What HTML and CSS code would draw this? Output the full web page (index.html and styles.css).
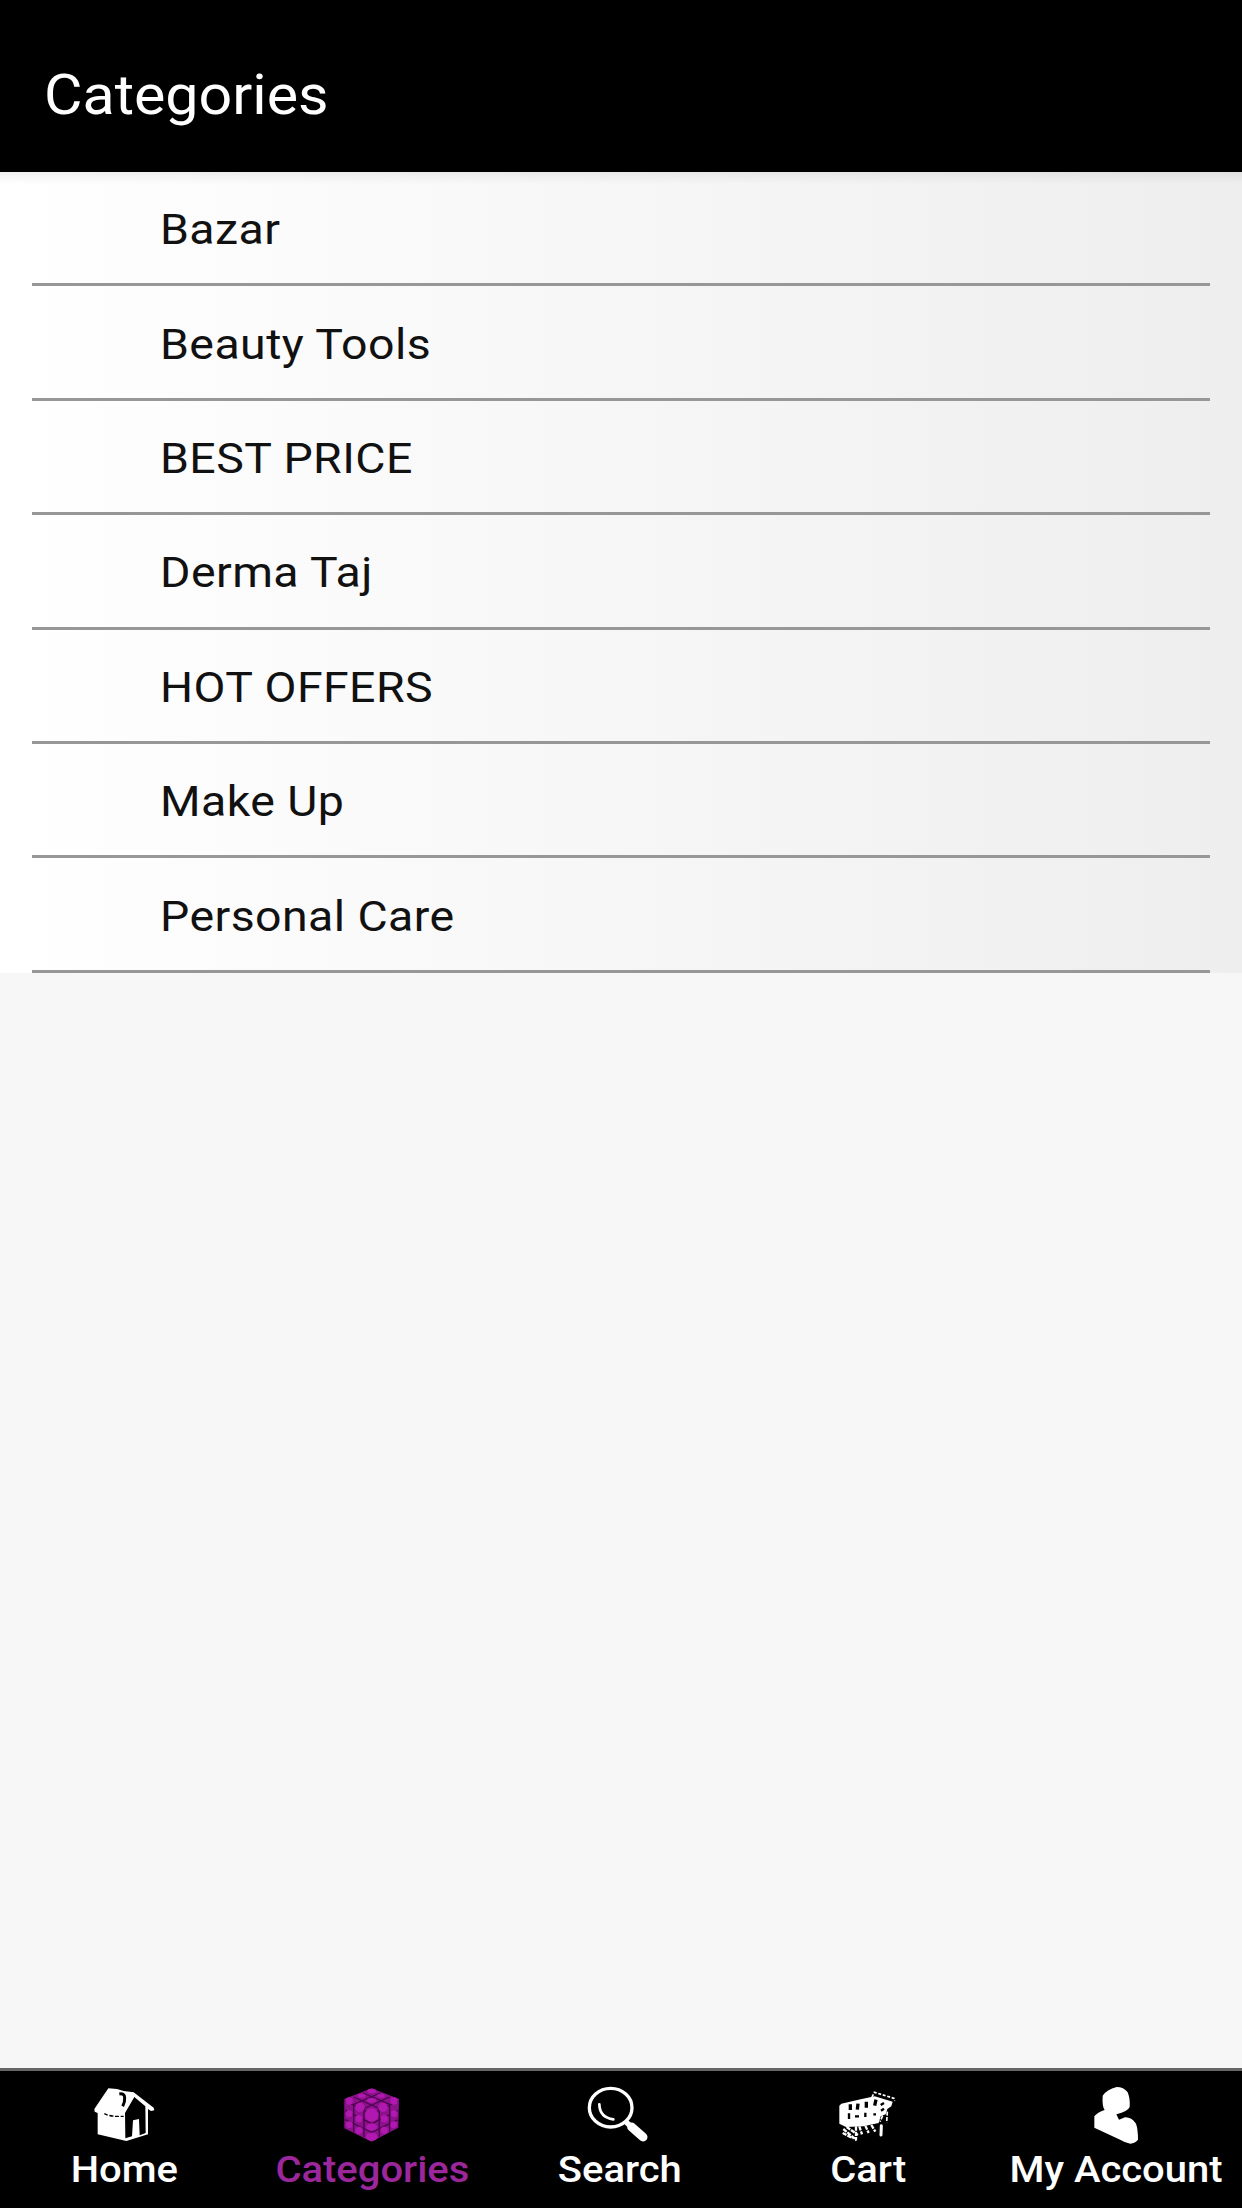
FILE: index.html
```
<!DOCTYPE html>
<html lang="en">
<head>
    <meta charset="UTF-8">
    <meta name="viewport" content="width=device-width, initial-scale=1.0">
    <title>Categories</title>
    <link rel="stylesheet" href="styles.css">
</head>
<body>
    <header class="app-header">
        <h1>Categories</h1>
    </header>

    <main class="content">
        <ul class="category-list">
            <li><span>Bazar</span></li>
            <li><span>Beauty Tools</span></li>
            <li><span>BEST PRICE</span></li>
            <li><span>Derma Taj</span></li>
            <li><span>HOT OFFERS</span></li>
            <li><span>Make Up</span></li>
            <li><span>Personal Care</span></li>
        </ul>
    </main>

    <nav class="tab-bar">
        <a class="tab">
            <svg class="tab-icon" viewBox="-2 0 270 225">
                <path fill="currentColor" d="M86 40 L112 42 L132 48 L162 52 L222 98 L224 106 L214 108 L205 102 L205 178 L140 198 L54 178 L54 114 L45 110 L44 102 Z"/>
                <path fill="#000" d="M164 66 L197 94 L198 174 L180 181 L178 132 L160 136 L157 184 L137 190 L136 114 Z"/>
                <path fill="none" stroke="#000" stroke-width="9" d="M119 57 Q135 54 135 68 Q136 82 129 94"/>
                <path fill="none" stroke="#000" stroke-width="4" stroke-dasharray="12 5" d="M74 116 Q92 126 132 124"/>
            </svg>
            <span class="label">Home</span>
        </a>
        <a class="tab active">
            <svg class="tab-icon" viewBox="-7 0 270 225">
                <path fill="#8b128b" d="M124 40 L206 72 L204 158 L124 200 L42 160 L42 72 Z"/>
                <g fill="none" stroke="#4d064e" stroke-width="4">
                    <path d="M44 78 L124 116 L204 78 M70 66 L150 102 M98 54 L178 88 M150 54 L70 88 M178 66 L98 102"/>
                    <path d="M70 88 V172 M101 102 V186 M147 102 V186 M178 88 V172"/>
                    <path d="M44 106 L124 146 L204 106 M44 134 L124 172 L204 134"/>
                </g>
                <g fill="#b018b0">
                    <ellipse cx="124" cy="48" rx="13" ry="7"/>
                    <ellipse cx="94" cy="62" rx="12" ry="6"/>
                    <ellipse cx="152" cy="62" rx="12" ry="6"/>
                    <ellipse cx="124" cy="76" rx="14" ry="7"/>
                    <circle cx="57" cy="78" r="11"/>
                    <circle cx="191" cy="78" r="11"/>
                    <circle cx="89" cy="97" r="14"/>
                    <circle cx="158" cy="97" r="14"/>
                    <circle cx="124" cy="120" r="20"/>
                    <circle cx="86" cy="131" r="11"/>
                    <circle cx="162" cy="131" r="11"/>
                    <circle cx="57" cy="116" r="10"/>
                    <circle cx="191" cy="116" r="10"/>
                    <circle cx="57" cy="149" r="10"/>
                    <circle cx="190" cy="149" r="10"/>
                    <circle cx="86" cy="166" r="11"/>
                    <circle cx="162" cy="166" r="11"/>
                    <ellipse cx="124" cy="156" rx="17" ry="11"/>
                    <ellipse cx="124" cy="185" rx="18" ry="12"/>
                </g>
            </svg>
            <span class="label">Categories</span>
        </a>
        <a class="tab">
            <svg class="tab-icon" viewBox="3 0 270 225">
                <ellipse cx="107" cy="98" rx="64" ry="58" fill="none" stroke="currentColor" stroke-width="10"/>
                <path fill="none" stroke="currentColor" stroke-width="8" stroke-linecap="round" d="M73 88 Q74 128 115 133"/>
                <path fill="none" stroke="currentColor" stroke-width="16" d="M150 138 L172 158"/>
                <path fill="none" stroke="currentColor" stroke-width="27" stroke-linecap="round" d="M170 156 L204 186"/>
            </svg>
            <span class="label">Search</span>
        </a>
        <a class="tab">
            <svg class="tab-icon" viewBox="-2 0 270 225">
                <path fill="currentColor" d="M44 92 L50 86 L108 73 L150 64 L204 80 L200 94 L188 102 L183 118 L168 124 L162 144 L116 154 L64 156 L44 146 Z"/>
                <g fill="none" stroke="#000" stroke-width="10">
                    <path d="M77 88 V105 M100 86 L98 104 M125 80 V98 M154 74 L150 92"/>
                    <path stroke-width="7" d="M73 115 V132 M91 124 H103 M122 113 V126 M146 118 H154 M168 90 L178 84 M169 107 L178 101"/>
                </g>
                <g fill="none" stroke="currentColor" stroke-width="5">
                    <path stroke-dasharray="9 5" d="M142 66 L149 52 L208 70 L210 78"/>
                    <path stroke-dasharray="12 4" d="M188 110 L186 142 M174 122 L166 140"/>
                    <path stroke-width="7" stroke-dasharray="13 3" d="M56 162 L96 196 M54 174 L84 190 M66 156 L100 180 M94 154 L94 194 M104 154 L112 178 M122 152 L132 174 M140 150 L152 170"/>
                    <path stroke-width="9" stroke-linecap="round" d="M170 152 L169 180"/>
                </g>
            </svg>
            <span class="label">Cart</span>
        </a>
        <a class="tab">
            <svg class="tab-icon" viewBox="-7 0 270 225">
                <path fill="currentColor" d="M82 62 Q94 44 124 36 Q145 36 157 52 Q165 72 163 96 Q158 109 123 118 L131 134 L149 127 Q168 126 182 146 Q188 162 188 194 Q180 204 165 206 Q150 204 136 195 L57 158 L57 124 Q66 112 88 105 Q80 94 82 62 Z"/>
            </svg>
            <span class="label">My Account</span>
        </a>
    </nav>
</body>
</html>
```
FILE: styles.css
```
* {
    margin: 0;
    padding: 0;
    box-sizing: border-box;
}

body {
    font-family: Roboto, "Liberation Sans", sans-serif;
    background: #f7f7f7;
    height: 100vh;
    display: flex;
    flex-direction: column;
    overflow: hidden;
}

.app-header {
    height: 172px;
    padding: 18px 0 0 44px;
    background: #000;
    color: #fff;
    display: flex;
    align-items: center;
}

.app-header h1 {
    font-size: 55px;
    font-weight: 400;
    transform: scaleX(1.075);
    transform-origin: left;
}

.content {
    flex: 1;
}

.category-list {
    list-style: none;
    height: 801px;
    padding: 0 32px;
    background: linear-gradient(to bottom, rgba(0,0,0,0.06), rgba(0,0,0,0) 12px),
                linear-gradient(to right, #fff, #eee);
    display: flex;
    flex-direction: column;
}

.category-list li {
    height: 114.4px;
    padding: 3px 0 0 128px;
    border-bottom: 3px solid #979797;
    font-size: 43px;
    color: #111;
    display: flex;
    align-items: center;
}

.category-list span {
    letter-spacing: 0.4px;
    transform: scaleX(1.08);
    transform-origin: left;
}

.tab-bar {
    height: 140px;
    border-top: 3px solid #666;
    background: #000;
    color: #fff;
    display: grid;
    grid-template-columns: repeat(5, 1fr);
}

.tab {
    padding-top: 4px;
    display: flex;
    flex-direction: column;
    align-items: center;
}

.tab-icon {
    width: 90px;
    height: 75px;
}

.label {
    margin-right: 3px;
    font-size: 36px;
    font-weight: 500;
    line-height: 40px;
    white-space: nowrap;
    transform: scaleX(1.11);
}

.tab:first-child .label,
.active .label {
    margin-right: 0;
}

.active {
    color: #9c279c;
}
```
